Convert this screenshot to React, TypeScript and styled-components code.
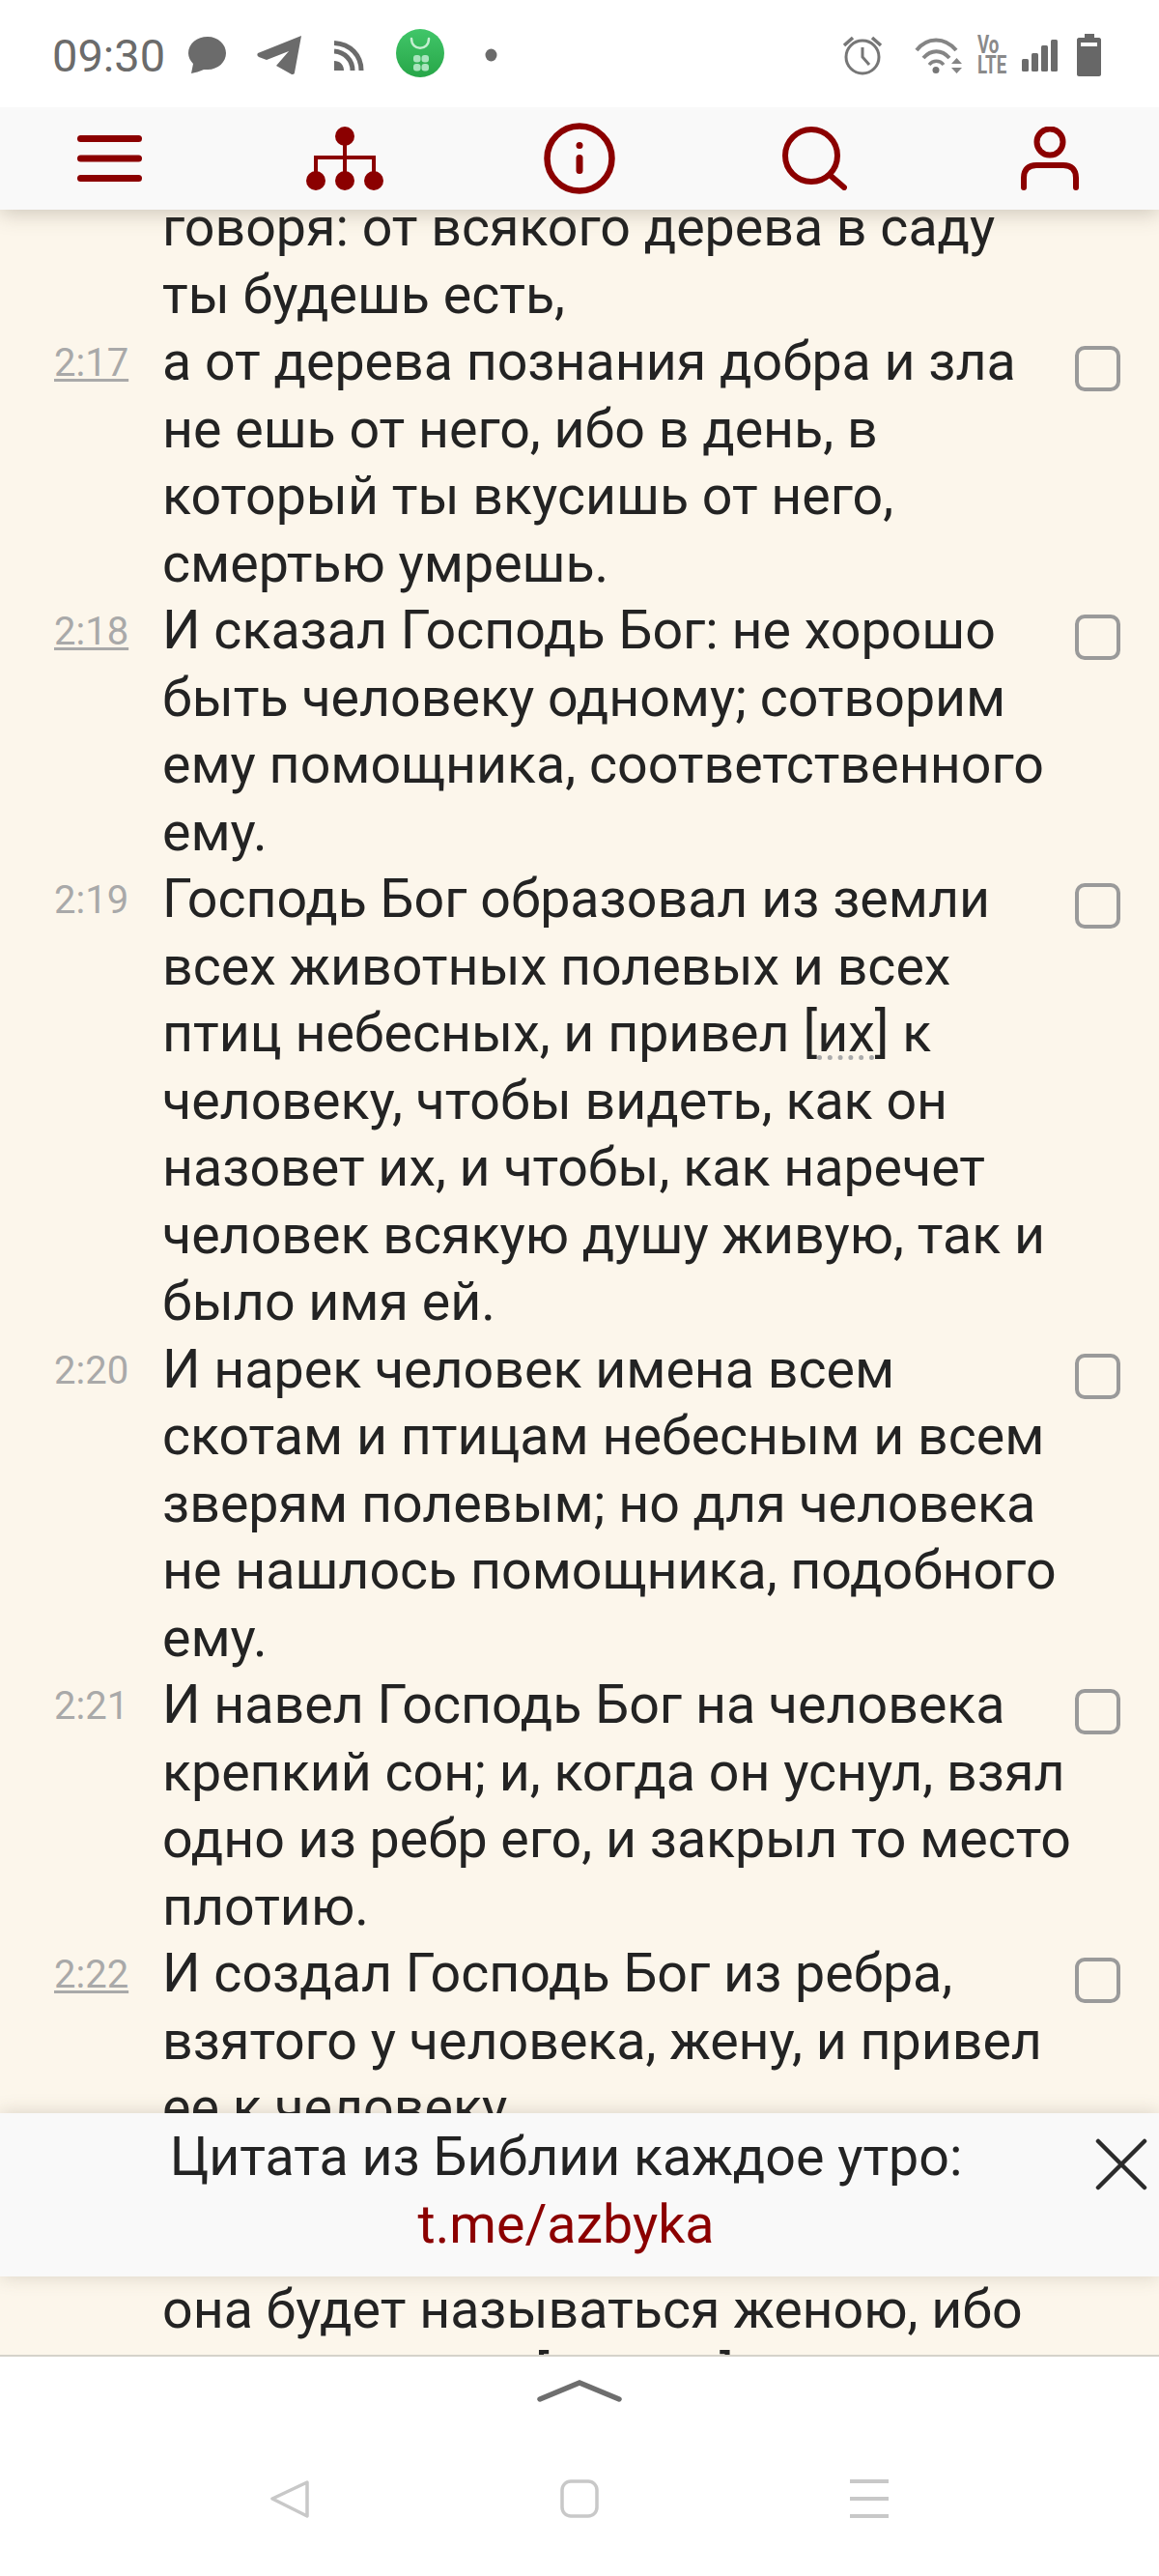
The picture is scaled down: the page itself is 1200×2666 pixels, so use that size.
import React from 'react';
import styled, { createGlobalStyle } from 'styled-components';

const GlobalStyle = createGlobalStyle`
  html, body {
    margin: 0;
    padding: 0;
    background: #ffffff;
  }
  body {
    font-family: Roboto, "Liberation Sans", sans-serif;
  }
`;

const Screen = styled.div`
  position: relative;
  width: 1200px;
  height: 2666px;
  overflow: hidden;
  background: #ffffff;
`;

const StatusBar = styled.div`
  position: relative;
  z-index: 4;
  height: 111px;
  box-sizing: border-box;
  display: flex;
  align-items: center;
  padding: 3px 60px 0 54px;
  color: #6b6b6b;
  background: #ffffff;
`;

const Clock = styled.span`
  width: 141px;
  font-size: 47px;
`;

const StatusGroup = styled.div`
  display: flex;
  align-items: center;
`;

const StatusRight = styled(StatusGroup)`
  margin-left: auto;
`;

const StatusIcon = styled.svg<{ $gap?: number }>`
  flex: none;
  margin-right: ${props => props.$gap ?? 0}px;
`;

const VolteMark = styled.div`
  flex: none;
  width: 31px;
  margin-right: 15px;
  color: #8a8a8a;
  font-size: 26px;
  font-weight: 700;
  line-height: 21px;
  white-space: nowrap;
  transform: scaleX(0.72);
  transform-origin: left center;
`;

const Toolbar = styled.div`
  position: absolute;
  z-index: 3;
  top: 111px;
  left: 0;
  right: 0;
  height: 106px;
  display: grid;
  grid-template-columns: repeat(5, 243.5px);
  justify-content: center;
  align-items: center;
  justify-items: center;
  background: #f9f9f9;
  box-shadow: 0 4px 20px rgba(90, 80, 60, 0.28);
`;

const Reader = styled.div`
  position: absolute;
  top: 111px;
  left: 0;
  right: 0;
  height: 2327px;
  overflow: hidden;
  background: #fcf6eb;
`;

const VerseList = styled.div`
  margin-top: 90px;
`;

const Verse = styled.div`
  display: grid;
  grid-template-columns: 168px 945px 1fr;
`;

const VerseNumber = styled.a<{ $linked?: boolean }>`
  justify-self: start;
  align-self: start;
  margin: 13px 0 0 56px;
  font-size: 40px;
  line-height: 46px;
  color: #a9a9a9;
  text-decoration: ${props => (props.$linked ? 'underline' : 'none')};
  text-decoration-thickness: 3px;
  text-underline-offset: 3px;
`;

const VerseText = styled.div`
  font-size: 55.5px;
  line-height: 69.5px;
  color: #232323;
`;

const VerseLine = styled.div`
  white-space: nowrap;
`;

const Dotted = styled.span`
  text-decoration: underline dotted #aaaaaa 5px;
  text-decoration-skip-ink: none;
  text-underline-offset: 4px;
`;

const CheckBox = styled.span`
  justify-self: start;
  margin-top: 18px;
  width: 47px;
  height: 47px;
  box-sizing: border-box;
  border: 4px solid #9a9a9a;
  border-radius: 10px;
`;

const GhostLabel = styled.div`
  position: absolute;
  top: 2243px;
  left: 40px;
  font-size: 46px;
  line-height: 70px;
  color: rgba(120, 100, 70, 0.015);
`;

const Notice = styled.div`
  position: absolute;
  z-index: 3;
  top: 2187px;
  left: 0;
  right: 0;
  height: 169px;
  box-sizing: border-box;
  padding-top: 11px;
  text-align: center;
  background: #f9f9f9;
  box-shadow: 0 0 18px rgba(90, 80, 60, 0.22);
  font-size: 55.5px;
  line-height: 70px;
  color: #232323;
`;

const NoticeLine = styled.div`
  padding-right: 28px;
`;

const NoticeLink = styled(NoticeLine)`
  color: #8b0000;
`;

const CloseButton = styled.svg`
  position: absolute;
  top: 26px;
  right: 12px;
`;

const BottomPanel = styled.div`
  position: absolute;
  z-index: 4;
  top: 2437px;
  left: 0;
  right: 0;
  bottom: 0;
  border-top: 2px solid #d5d2ca;
  background: #ffffff;
`;

const Handle = styled.svg`
  display: block;
  margin: 23px auto 0;
`;

const NavBar = styled.div`
  position: absolute;
  top: 127px;
  left: 0;
  right: 0;
  display: grid;
  grid-template-columns: repeat(3, 300px);
  justify-content: center;
  justify-items: center;
`;

const MessageIcon = () => (
  <StatusIcon $gap={32} width="39" height="38" viewBox="0 0 39 38">
    <path d="M20 0C9 0 0 7 0 17c0 4 2 8 5 11l-2 10c4-1 9-2 13-4h4c11 0 19-8 19-17S31 0 20 0z" fill="#6b6b6b" />
  </StatusIcon>
);

const SendIcon = () => (
  <StatusIcon $gap={34} width="46" height="40" viewBox="0 0 46 40">
    <path d="M46 0 1 18c-1 1-1 3 1 4l8 3 23-9-13 15 16 9c1 0 3 0 3-2z" fill="#6b6b6b" />
  </StatusIcon>
);

const RssIcon = () => (
  <StatusIcon $gap={33} width="31" height="31" viewBox="0 0 31 31">
    <path d="M0 21c6 0 10 4 10 10H0z" fill="#6b6b6b" />
    <path d="M0 11c11 1 19 9 19 20" fill="none" stroke="#6b6b6b" strokeWidth="5" />
    <path d="M0 2.500c17 1 28 13 28 28.500" fill="none" stroke="#6b6b6b" strokeWidth="5" />
  </StatusIcon>
);

const StoreIcon = () => (
  <StatusIcon $gap={42} width="50" height="50" viewBox="0 0 50 50" style={{ marginTop: -5 }}>
    <defs>
      <linearGradient id="storeFill" x1="0" y1="0" x2="0" y2="1">
        <stop offset="0" stopColor="#41c669" />
        <stop offset="1" stopColor="#27a648" />
      </linearGradient>
    </defs>
    <circle cx="25" cy="25" r="25" fill="url(#storeFill)" />
    <path d="M16 10c0 13 18 13 18 0" fill="none" stroke="#c4efd0" strokeWidth="2.500" strokeLinecap="round" />
    <g fill="#a9e4bd">
      <rect x="18" y="27" width="7.500" height="7.500" rx="3" />
      <rect x="26.500" y="27" width="7.500" height="7.500" rx="3" />
      <rect x="18" y="36" width="7.500" height="7.500" rx="3" />
      <rect x="26.500" y="36" width="7.500" height="7.500" rx="3" />
    </g>
  </StatusIcon>
);

const AlarmIcon = () => (
  <StatusIcon $gap={33} width="42" height="42" viewBox="0 0 42 42">
    <circle cx="21" cy="23" r="17" fill="none" stroke="#767676" strokeWidth="3" />
    <path d="M21 13v10l7 8" fill="none" stroke="#767676" strokeWidth="3" />
    <path d="M2 11l9-8M40 11l-9-8" fill="none" stroke="#767676" strokeWidth="3.500" />
  </StatusIcon>
);

const WifiIcon = () => (
  <StatusIcon $gap={16} width="49" height="37" viewBox="0 0 49 37">
    <path d="M2 13C13 -1 31 -1 43 13" fill="none" stroke="#858585" strokeWidth="4" />
    <path d="M9 21c8-9 19-9 27 0" fill="none" stroke="#858585" strokeWidth="4" />
    <path d="M15 28c4-5 11-5 15 0" fill="none" stroke="#858585" strokeWidth="3.500" />
    <circle cx="22" cy="33.500" r="3.500" fill="#767676" />
    <path d="M38 27l5.500-6 5.500 6zM38 31h11l-5.500 6z" fill="#858585" />
  </StatusIcon>
);

const SignalIcon = () => (
  <StatusIcon $gap={20} width="37" height="33" viewBox="0 0 37 33">
    <rect x="0" y="20" width="7" height="13" rx="1.500" fill="#6b6b6b" />
    <rect x="10" y="14" width="7" height="19" rx="1.500" fill="#6b6b6b" />
    <rect x="20" y="6" width="7" height="27" rx="1.500" fill="#6b6b6b" />
    <rect x="30" y="0" width="7" height="33" rx="1.500" fill="#6b6b6b" />
  </StatusIcon>
);

const BatteryIcon = () => (
  <StatusIcon width="25" height="44" viewBox="0 0 25 44">
    <path d="M8 0h10v4h5c1 0 2 1 2 2v36c0 1-1 2-2 2H2c-1 0-2-1-2-2V6c0-1 1-2 2-2h6z" fill="#676767" />
    <rect x="4" y="9" width="17" height="4" fill="#ffffff" />
  </StatusIcon>
);

const MenuIcon = () => (
  <svg width="67" height="48" viewBox="0 0 67 48">
    <g fill="#8b0000">
      <rect x="0" y="0" width="67" height="7" rx="3.500" />
      <rect x="0" y="20.500" width="67" height="7" rx="3.500" />
      <rect x="0" y="41" width="67" height="7" rx="3.500" />
    </g>
  </svg>
);

const TreeIcon = () => (
  <svg width="80" height="66" viewBox="0 0 80 66">
    <g fill="#8b0000">
      <circle cx="40" cy="10" r="10" />
      <circle cx="10" cy="56" r="10" />
      <circle cx="40" cy="56" r="10" />
      <circle cx="70" cy="56" r="10" />
    </g>
    <path d="M40 16v34M10 50V32h60v18" fill="none" stroke="#8b0000" strokeWidth="4" />
  </svg>
);

const InfoIcon = () => (
  <svg width="74" height="74" viewBox="0 0 74 74">
    <circle cx="37" cy="37" r="33.500" fill="none" stroke="#8b0000" strokeWidth="6.500" />
    <circle cx="37" cy="23.500" r="3.500" fill="#8b0000" />
    <rect x="33.500" y="33" width="7" height="20" rx="3.500" fill="#8b0000" />
  </svg>
);

const SearchIcon = () => (
  <svg width="67" height="66" viewBox="0 0 67 66">
    <circle cx="30" cy="30" r="27" fill="none" stroke="#8b0000" strokeWidth="6" />
    <path d="M49 50 64 63" fill="none" stroke="#8b0000" strokeWidth="6" strokeLinecap="round" />
  </svg>
);

const UserIcon = () => (
  <svg width="60" height="66" viewBox="0 0 60 66">
    <circle cx="30" cy="16" r="13.500" fill="none" stroke="#8b0000" strokeWidth="6" />
    <path d="M3 63V53c0-9 5-13 13-13h28c8 0 13 4 13 13v10" fill="none" stroke="#8b0000" strokeWidth="6" strokeLinecap="round" />
  </svg>
);

interface VerseData {
  ref: string;
  linked?: boolean;
  lines: React.ReactNode[];
}

const verses: VerseData[] = [
  { ref: '', lines: ['говоря: от всякого дерева в саду', 'ты будешь есть,'] },
  {
    ref: '2:17',
    linked: true,
    lines: ['а от дерева познания добра и зла', 'не ешь от него, ибо в день, в', 'который ты вкусишь от него,', 'смертью умрешь.'],
  },
  {
    ref: '2:18',
    linked: true,
    lines: ['И сказал Господь Бог: не хорошо', 'быть человеку одному; сотворим', 'ему помощника, соответственного', 'ему.'],
  },
  {
    ref: '2:19',
    lines: [
      'Господь Бог образовал из земли',
      'всех животных полевых и всех',
      <>птиц небесных, и привел [<Dotted>их</Dotted>] к</>,
      'человеку, чтобы видеть, как он',
      'назовет их, и чтобы, как наречет',
      'человек всякую душу живую, так и',
      'было имя ей.',
    ],
  },
  {
    ref: '2:20',
    lines: ['И нарек человек имена всем', 'скотам и птицам небесным и всем', 'зверям полевым; но для человека', 'не нашлось помощника, подобного', 'ему.'],
  },
  {
    ref: '2:21',
    lines: ['И навел Господь Бог на человека', 'крепкий сон; и, когда он уснул, взял', 'одно из ребр его, и закрыл то место', 'плотию.'],
  },
  {
    ref: '2:22',
    linked: true,
    lines: ['И создал Господь Бог из ребра,', 'взятого у человека, жену, и привел', 'ее к человеку.'],
  },
  {
    ref: '2:23',
    lines: ['И сказал человек: вот, это кость от', 'костей моих и плоть от плоти моей;', 'она будет называться женою, ибо', 'взята от мужа [своего].'],
  },
];

const App: React.FC = () => {
  return (
    <Screen>
      <GlobalStyle />
      <StatusBar>
        <Clock>09:30</Clock>
        <StatusGroup>
          <MessageIcon />
          <SendIcon />
          <RssIcon />
          <StoreIcon />
          <svg width="13" height="14" viewBox="0 0 13 14">
            <ellipse cx="6.500" cy="7" rx="6" ry="6.500" fill="#6b6b6b" />
          </svg>
        </StatusGroup>
        <StatusRight>
          <AlarmIcon />
          <WifiIcon />
          <VolteMark>
            <div>Vo</div>
            <div>LTE</div>
          </VolteMark>
          <SignalIcon />
          <BatteryIcon />
        </StatusRight>
      </StatusBar>
      <Toolbar>
        <MenuIcon />
        <TreeIcon />
        <InfoIcon />
        <SearchIcon />
        <UserIcon />
      </Toolbar>
      <Reader>
        <VerseList>
          {verses.map((verse, index) => (
            <Verse key={index}>
              <VerseNumber $linked={verse.linked}>{verse.ref}</VerseNumber>
              <VerseText>
                {verse.lines.map((line, lineIndex) => (
                  <VerseLine key={lineIndex}>{line}</VerseLine>
                ))}
              </VerseText>
              {verse.ref ? <CheckBox /> : null}
            </Verse>
          ))}
        </VerseList>
        <GhostLabel>Глава</GhostLabel>
      </Reader>
      <Notice>
        <NoticeLine>Цитата из Библии каждое утро:</NoticeLine>
        <NoticeLink>t.me/azbyka</NoticeLink>
        <CloseButton width="54" height="54" viewBox="0 0 54 54">
          <path d="M3 3 51 51M51 3 3 51" fill="none" stroke="#2b2b2b" strokeWidth="4.500" strokeLinecap="round" />
        </CloseButton>
      </Notice>
      <BottomPanel>
        <Handle width="88" height="24" viewBox="0 0 88 24">
          <path d="M3 21 44 4l41 17" fill="none" stroke="#6e6e6e" strokeWidth="5.500" strokeLinecap="round" />
        </Handle>
        <NavBar>
          <svg width="40" height="40" viewBox="0 0 40 40">
            <path d="M38 3 2 20l36 18z" fill="none" stroke="#c8c8c8" strokeWidth="3.500" strokeLinejoin="round" />
          </svg>
          <svg width="40" height="40" viewBox="0 0 40 40">
            <rect x="2" y="2" width="36" height="36" rx="9" fill="none" stroke="#c8c8c8" strokeWidth="3.500" />
          </svg>
          <svg width="40" height="40" viewBox="0 0 40 40">
            <path d="M0 2h40M0 20h40M0 38h40" fill="none" stroke="#c8c8c8" strokeWidth="4" />
          </svg>
        </NavBar>
      </BottomPanel>
    </Screen>
  );
};

export default App;
